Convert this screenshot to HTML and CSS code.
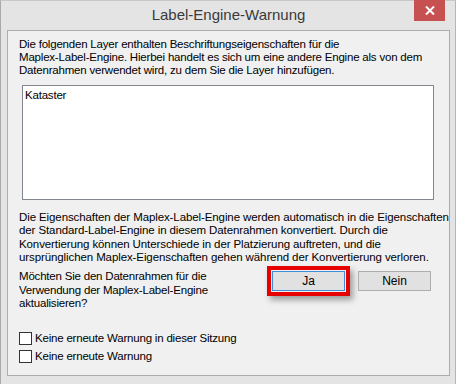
FILE: index.html
```html
<!DOCTYPE html>
<html lang="de">
<head>
    <meta charset="UTF-8">
    <title>Label-Engine-Warnung</title>
    <link rel="stylesheet" href="styles.css">
</head>
<body>
    <div class="window">
        <div class="titlebar">
            <span class="title">Label-Engine-Warnung</span>
            <button class="close" aria-label="Schließen">
                <svg width="10" height="9" viewBox="0 0 10 9">
                    <path d="M1 0.5 L9 8.5 M9 0.5 L1 8.5" stroke="#fff" stroke-width="2"/>
                </svg>
            </button>
        </div>
        <div class="client">
            <p class="intro">Die folgenden Layer enthalten Beschriftungseigenschaften für die<br>Maplex-Label-Engine. Hierbei handelt es sich um eine andere Engine als von dem<br>Datenrahmen verwendet wird, zu dem Sie die Layer hinzufügen.</p>
            <div class="listbox">
                <div class="list-item">Kataster</div>
            </div>
            <p class="info">Die Eigenschaften der Maplex-Label-Engine werden automatisch in die Eigenschaften<br>der Standard-Label-Engine in diesem Datenrahmen konvertiert. Durch die<br>Konvertierung können Unterschiede in der Platzierung auftreten, und die<br>ursprünglichen Maplex-Eigenschaften gehen während der Konvertierung verloren.</p>
            <div class="question-row">
                <p class="question">Möchten Sie den Datenrahmen für die<br>Verwendung der Maplex-Label-Engine<br>aktualisieren?</p>
                <div class="buttons">
                    <span class="highlight"><button class="btn focused">Ja</button></span>
                    <button class="btn">Nein</button>
                </div>
            </div>
            <div class="checks">
                <label class="check"><span class="box"></span>Keine erneute Warnung in dieser Sitzung</label>
                <label class="check"><span class="box"></span>Keine erneute Warnung</label>
            </div>
        </div>
    </div>
</body>
</html>
```
FILE: styles.css
```css
body {
    margin: 0;
    background: #fff;
    font-family: "Liberation Sans", Arial, sans-serif;
    font-size: 11.5px;
    letter-spacing: -0.2px;
    color: #000;
}
.window {
    width: 456px;
    height: 384px;
    box-sizing: border-box;
    background: #e4e4e4;
    border-left: 1px solid #a9a9a9;
    border-top: 1px solid #c8c8c8;
    border-right: 1px solid #b5b5b5;
    padding: 0 5px 0 6px;
}
.titlebar {
    height: 29px;
    display: flex;
    align-items: center;
    justify-content: center;
    position: relative;
}
.title {
    font-size: 15px;
    letter-spacing: 0;
    color: #3a3a3a;
    margin-top: -2px;
}
.close {
    position: absolute;
    top: -1px;
    right: 5px;
    width: 31px;
    height: 21px;
    border: none;
    padding: 0;
    background: #c75050;
    display: flex;
    align-items: center;
    justify-content: center;
}
.client {
    height: 346px;
    box-sizing: border-box;
    background: #f0f0f0;
    border: 1px solid #adadad;
    padding: 7px 15px 0 11px;
    white-space: nowrap;
}
p {
    margin: 0;
}
.intro {
    line-height: 13px;
}
.listbox {
    margin: 8px 0 0 3px;
    width: 412px;
    height: 115px;
    box-sizing: border-box;
    background: #fff;
    border: 1px solid #828790;
    padding: 2px 2px;
}
.list-item {
    line-height: 14px;
    color: #000;
}
.info {
    margin-top: 11px;
    line-height: 13.3px;
    letter-spacing: -0.1px;
}
.question-row {
    display: flex;
    justify-content: space-between;
    margin-top: 2px;
}
.question {
    line-height: 13.5px;
    padding-top: 4px;
}
.buttons {
    display: flex;
    align-items: center;
    gap: 8px;
    padding-right: 3px;
    height: 30px;
}
.highlight {
    display: flex;
    padding: 1px;
    border: 4px solid #e60000;
    box-shadow: 3px 4px 6px rgba(0, 0, 0, 0.35);
}
.btn {
    width: 73px;
    height: 20px;
    box-sizing: border-box;
    background: #e1e1e1;
    border: 1px solid #adadad;
    font-family: inherit;
    font-size: 12px;
    color: #000;
    padding: 0;
}
.btn.focused {
    border-color: #3c8cd6;
}
.checks {
    margin-top: 21px;
    display: flex;
    flex-direction: column;
    gap: 5px;
}
.check {
    display: flex;
    align-items: center;
    gap: 3px;
    line-height: 13px;
}
.box {
    width: 13px;
    height: 13px;
    box-sizing: border-box;
    background: #fff;
    border: 1px solid #333;
}
```
